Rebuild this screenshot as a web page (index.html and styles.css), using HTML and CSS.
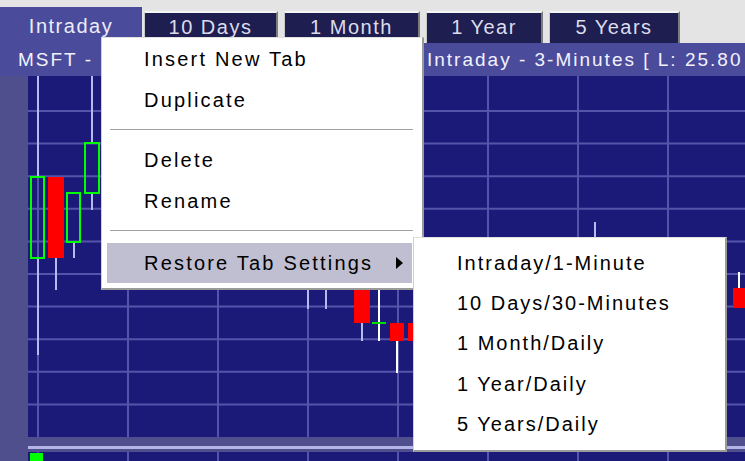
FILE: index.html
```html
<!DOCTYPE html>
<html lang="en">
<head>
  <meta charset="UTF-8" />
  <title>MSFT Chart</title>
  <link rel="stylesheet" href="styles.css">
</head>
<body>
  <div class="app">
    <div class="tabbar">
      <div class="tab active" style="width: 142px">Intraday</div>
      <div class="tab" style="width: 134px; margin-left: -4px">10 Days</div>
      <div class="tab" style="width: 136px">1 Month</div>
      <div class="tab" style="width: 117px">1 Year</div>
      <div class="tab" style="width: 131px">5 Years</div>
    </div>

    <div class="titlebar">
      <span class="sym">MSFT -</span>
      <span>Intraday - 3-Minutes [ L: 25.80</span>
    </div>

    <div class="chart">
      <div class="axis"></div>
      <div class="plot">
        <svg width="717" height="361" viewBox="0 0 717 361">
          <g class="grid">
            <line x1="10" y1="0" x2="10" y2="361"/>
            <line x1="100" y1="0" x2="100" y2="361"/>
            <line x1="190" y1="0" x2="190" y2="361"/>
            <line x1="280" y1="0" x2="280" y2="361"/>
            <line x1="370" y1="0" x2="370" y2="361"/>
            <line x1="460" y1="0" x2="460" y2="361"/>
            <line x1="550" y1="0" x2="550" y2="361"/>
            <line x1="640" y1="0" x2="640" y2="361"/>
            <line x1="0" y1="35" x2="717" y2="35"/>
            <line x1="0" y1="67.6" x2="717" y2="67.6"/>
            <line x1="0" y1="100.2" x2="717" y2="100.2"/>
            <line x1="0" y1="132.8" x2="717" y2="132.8"/>
            <line x1="0" y1="165.4" x2="717" y2="165.4"/>
            <line x1="0" y1="198" x2="717" y2="198"/>
            <line x1="0" y1="230.6" x2="717" y2="230.6"/>
            <line x1="0" y1="263.2" x2="717" y2="263.2"/>
            <line x1="0" y1="295.8" x2="717" y2="295.8"/>
            <line x1="0" y1="328.4" x2="717" y2="328.4"/>
          </g>

          <!-- wicks -->
          <g class="wick">
            <line x1="10" y1="0" x2="10" y2="101"/>
            <line x1="10" y1="182" x2="10" y2="279"/>
            <line x1="28" y1="182" x2="28" y2="214"/>
            <line x1="46" y1="166" x2="46" y2="182"/>
            <line x1="64" y1="0" x2="64" y2="67"/>
            <line x1="64" y1="117" x2="64" y2="134"/>
            <line x1="280" y1="180" x2="280" y2="233"/>
            <line x1="298" y1="180" x2="298" y2="233"/>
            <line x1="334" y1="247" x2="334" y2="265"/>
            <line x1="567" y1="146" x2="567" y2="164"/>
          </g>
          <g class="wick bright">
            <line x1="351" y1="200" x2="351" y2="265"/>
            <line x1="369" y1="265" x2="369" y2="297"/>
            <line x1="711" y1="196" x2="711" y2="212"/>
          </g>

          <!-- bodies -->
          <rect class="up" x="3" y="101" width="13" height="81"/>
          <rect class="down" x="20" y="101" width="16" height="81"/>
          <rect class="up" x="39" y="117" width="13" height="49"/>
          <rect class="up" x="57" y="67" width="14" height="50"/>
          <rect class="down" x="326" y="190" width="16" height="57"/>
          <line class="doji" x1="344" y1="247" x2="358" y2="247"/>
          <rect class="down" x="362" y="247" width="14" height="18"/>
          <rect class="down" x="380" y="247" width="16" height="18"/>
          <rect class="down" x="705" y="212" width="17" height="20"/>
        </svg>
      </div>
    </div>

    <div class="scroller">
      <div class="scroll-line"></div>
    </div>

    <div class="volume">
      <div class="axis"></div>
      <div class="vol-plot">
        <svg width="717" height="9" viewBox="0 0 717 9">
          <g class="grid">
            <line x1="10" y1="0" x2="10" y2="9"/>
            <line x1="100" y1="0" x2="100" y2="9"/>
            <line x1="190" y1="0" x2="190" y2="9"/>
            <line x1="280" y1="0" x2="280" y2="9"/>
            <line x1="370" y1="0" x2="370" y2="9"/>
            <line x1="460" y1="0" x2="460" y2="9"/>
            <line x1="550" y1="0" x2="550" y2="9"/>
            <line x1="640" y1="0" x2="640" y2="9"/>
          </g>
          <rect class="vol-bar" x="2" y="1" width="13" height="8"/>
        </svg>
      </div>
    </div>

    <!-- tab context menu -->
    <ul class="menu ctx">
      <li>Insert New Tab</li>
      <li>Duplicate</li>
      <li class="sep"></li>
      <li>Delete</li>
      <li>Rename</li>
      <li class="sep"></li>
      <li class="hover has-sub">Restore Tab Settings <span class="arrow"></span></li>
    </ul>

    <ul class="menu sub">
      <li>Intraday/1-Minute</li>
      <li>10 Days/30-Minutes</li>
      <li>1 Month/Daily</li>
      <li>1 Year/Daily</li>
      <li>5 Years/Daily</li>
    </ul>
  </div>
</body>
</html>
```

FILE: styles.css
```css
body {
  margin: 0;
  padding: 0;
  background: #e4e4e4;
  font-family: "Liberation Sans", Arial, sans-serif;
}
.app {
  position: relative;
  width: 745px;
  height: 461px;
  overflow: hidden;
}
.tabbar {
  display: flex;
  align-items: flex-end;
  gap: 6px;
  height: 43px;
  background: #e4e4e4;
}
.tab {
  box-sizing: border-box;
  height: 32px;
  padding-top: 3px;
  text-align: center;
  font-size: 20px;
  letter-spacing: 1.5px;
  color: #dcdcec;
  background: #1e1e50;
  border-top: 2px solid #f4f4f4;
  border-left: 1px solid #c8c8c8;
  border-right: 2px solid #7c7c7c;
}
.tab.active {
  height: 36px;
  padding-top: 8px;
  color: #ececfa;
  background: #4b4b9b;
  border: none;
}
.titlebar {
  display: flex;
  height: 33px;
  align-items: center;
  padding-left: 18px;
  background: #4b4b9b;
  color: #f2f2ff;
  font-size: 19px;
  letter-spacing: 2px;
  white-space: nowrap;
}
.titlebar .sym {
  width: 409px;
  flex-shrink: 0;
}
.chart {
  display: flex;
  height: 361px;
}
.axis {
  width: 28px;
  flex-shrink: 0;
  background: #4f4f8d;
}
.plot, .vol-plot {
  flex: 1;
  background: #1c1a78;
}
.plot svg, .vol-plot svg {
  display: block;
}
.grid line {
  stroke: #5454aa;
  stroke-width: 2;
}
.wick line {
  stroke: #b8b8f2;
  stroke-width: 2;
}
.wick.bright line {
  stroke: #ffffff;
}
.up {
  fill: none;
  stroke: #00ff00;
  stroke-width: 2;
}
.down {
  fill: #ff0000;
}
.doji {
  stroke: #00e000;
  stroke-width: 2;
}
.scroller {
  height: 15px;
  background: #4f4f8d;
  padding: 9px 0 0 28px;
  box-sizing: border-box;
}
.scroll-line {
  height: 3px;
  background: #b4b4e6;
}
.volume {
  display: flex;
  height: 9px;
}
.vol-bar {
  fill: #00ff00;
}

/* popup menus */
.menu {
  position: absolute;
  margin: 0;
  list-style: none;
  background: #fff;
  color: #000;
  font-size: 20px;
  border-top: 1px solid #e0e0e0;
  border-left: 1px solid #d0d0d0;
  border-right: 2px solid #9a9a9a;
  border-bottom: 2px solid #9a9a9a;
  box-sizing: border-box;
}
.menu li {
  display: flex;
  align-items: center;
  height: 41px;
}
.ctx {
  left: 101px;
  top: 37px;
  width: 323px;
  height: 253px;
  padding: 1px 10px 0 5px;
  letter-spacing: 2.2px;
}
.ctx li {
  padding-left: 37px;
}
.ctx li.sep {
  height: 19px;
  padding: 0;
  margin: 0 -1px 0 3px;
}
.ctx li.sep::before {
  content: "";
  flex: 1;
  height: 1px;
  border-top: 1px solid #a0a0a0;
  border-bottom: 1px solid #fff;
}
.ctx li.hover {
  height: 40px;
  margin-top: 2px;
  background: #c0bfd2;
}
.arrow {
  margin-left: auto;
  margin-right: 9px;
  width: 0;
  height: 0;
  border-top: 6px solid transparent;
  border-bottom: 6px solid transparent;
  border-left: 7px solid #000;
}
.sub {
  left: 413px;
  top: 237px;
  width: 314px;
  height: 215px;
  padding: 5px 0 0 43px;
  letter-spacing: 2px;
}
.sub li {
  height: 40.3px;
}
```
